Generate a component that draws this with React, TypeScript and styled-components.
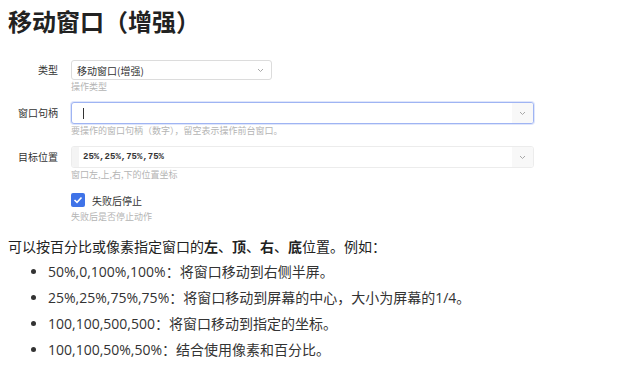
import React from "react";
import styled, { createGlobalStyle } from "styled-components";

const Global = createGlobalStyle`
  html, body { margin: 0; padding: 0; background: #fff; }
  body { font-family: "Open Sans", "Noto Sans CJK SC", sans-serif; color: #333; }
`;

const Page = styled.div`
  padding: 5px 8px 0 8px;
  width: 621px;
  box-sizing: border-box;
`;

const Title = styled.h1`
  margin: 0 0 23px 0;
  font-family: "Noto Sans CJK SC", sans-serif;
  font-size: 24px;
  line-height: 32px;
  font-weight: 700;
  color: #222;
`;

const Form = styled.div`
  display: flex;
  flex-direction: column;
  gap: 8px;
  margin-left: -8px;
`;

const Row = styled.div`
  display: grid;
  grid-template-columns: 58px 1fr;
  column-gap: 13px;
  font-family: "Noto Sans CJK SC", sans-serif;
`;

const Label = styled.div<{ $h: number }>`
  text-align: right;
  font-size: 10px;
  line-height: ${(p) => p.$h}px;
  color: #333;
`;

const Field = styled.div`
  display: flex;
  flex-direction: column;
`;

const Box = styled.div<{ $w?: number; $h: number; $variant?: "plain" | "focus" | "faint" }>`
  box-sizing: border-box;
  width: ${(p) => (p.$w ? `${p.$w}px` : "463px")};
  height: ${(p) => p.$h}px;
  border-radius: 3px;
  border: 1px solid
    ${(p) => (p.$variant === "focus" ? "#9fb4f3" : p.$variant === "faint" ? "#ececec" : "#dcdcdc")};
  box-shadow: ${(p) => (p.$variant === "focus" ? "0 0 0 1px #dfe6fb" : "none")};
  display: flex;
  align-items: center;
  overflow: hidden;
  background: #fff;
`;

const Gutter = styled.div`
  width: 7px;
  align-self: stretch;
  background: #f4f4f4;
`;

const Value = styled.div<{ $mono?: boolean }>`
  flex: 1;
  padding-left: ${(p) => (p.$mono ? "4px" : "5px")};
  font-family: ${(p) => (p.$mono ? '"Liberation Mono", monospace' : '"Noto Sans CJK SC", sans-serif')};
  font-size: ${(p) => (p.$mono ? "9px" : "10px")};
  font-weight: ${(p) => (p.$mono ? 700 : 400)};
  color: #333;
  display: flex;
  align-items: center;
`;

const Caret = styled.span`
  display: inline-block;
  width: 1px;
  height: 11px;
  background: #333;
  margin-left: 6px;
`;

const Arrow = styled.div<{ $shade?: boolean }>`
  width: 21px;
  align-self: stretch;
  display: flex;
  align-items: center;
  justify-content: center;
  background: ${(p) => (p.$shade ? "#f8f8f8" : "transparent")};
`;

const Help = styled.div`
  font-size: 9px;
  line-height: 14px;
  color: #b4b4b4;
`;

const CheckRow = styled.div`
  display: flex;
  align-items: center;
  gap: 7px;
  height: 20px;
`;

const CheckBox = styled.div`
  width: 14px;
  height: 14px;
  border-radius: 2px;
  background: #3f73e8;
  display: flex;
  align-items: center;
  justify-content: center;
`;

const CheckLabel = styled.span`
  font-size: 10px;
  color: #333;
`;

const Para = styled.p`
  margin: 12px 0 0 0;
  font-size: 14px;
  line-height: 22px;
  color: #222;
  b { font-weight: 700; }
`;

const List = styled.ul`
  margin: 2px 0 0 0;
  padding-left: 40px;
  font-size: 14px;
  line-height: 24px;
  color: #333;
  li { margin-bottom: 2px; }
`;

const Chevron = () => (
  <svg width="7" height="5" viewBox="0 0 7 5">
    <path d="M1 1 L3.5 3.5 L6 1" fill="none" stroke="#a8a8a8" strokeWidth="1" />
  </svg>
);

export default function App() {
  return (
    <Page>
      <Global />
      <Title>移动窗口（增强）</Title>
      <Form>
        <Row>
          <Label $h={20}>类型</Label>
          <Field>
            <Box $w={201} $h={20}>
              <Value>移动窗口(增强)</Value>
              <Arrow>
                <Chevron />
              </Arrow>
            </Box>
            <Help>操作类型</Help>
          </Field>
        </Row>
        <Row>
          <Label $h={22}>窗口句柄</Label>
          <Field>
            <Box $h={22} $variant="focus">
              <Value>
                <Caret />
              </Value>
              <Arrow $shade>
                <Chevron />
              </Arrow>
            </Box>
            <Help>要操作的窗口句柄（数字），留空表示操作前台窗口。</Help>
          </Field>
        </Row>
        <Row>
          <Label $h={22}>目标位置</Label>
          <Field>
            <Box $h={22} $variant="faint">
              <Gutter />
              <Value $mono>25%,25%,75%,75%</Value>
              <Arrow $shade>
                <Chevron />
              </Arrow>
            </Box>
            <Help>窗口左,上,右,下的位置坐标</Help>
          </Field>
        </Row>
        <Row>
          <div />
          <Field>
            <CheckRow>
              <CheckBox>
                <svg width="10" height="8" viewBox="0 0 10 8">
                  <path d="M1.5 4 L4 6.3 L8.5 1.5" fill="none" stroke="#fff" strokeWidth="1.6" />
                </svg>
              </CheckBox>
              <CheckLabel>失败后停止</CheckLabel>
            </CheckRow>
            <Help>失败后是否停止动作</Help>
          </Field>
        </Row>
      </Form>
      <Para>
        可以按百分比或像素指定窗口的<b>左</b>、<b>顶</b>、<b>右</b>、<b>底</b>位置。例如：
      </Para>
      <List>
        <li>50%,0,100%,100%：将窗口移动到右侧半屏。</li>
        <li>25%,25%,75%,75%：将窗口移动到屏幕的中心，大小为屏幕的1/4。</li>
        <li>100,100,500,500：将窗口移动到指定的坐标。</li>
        <li>100,100,50%,50%：结合使用像素和百分比。</li>
      </List>
    </Page>
  );
}
